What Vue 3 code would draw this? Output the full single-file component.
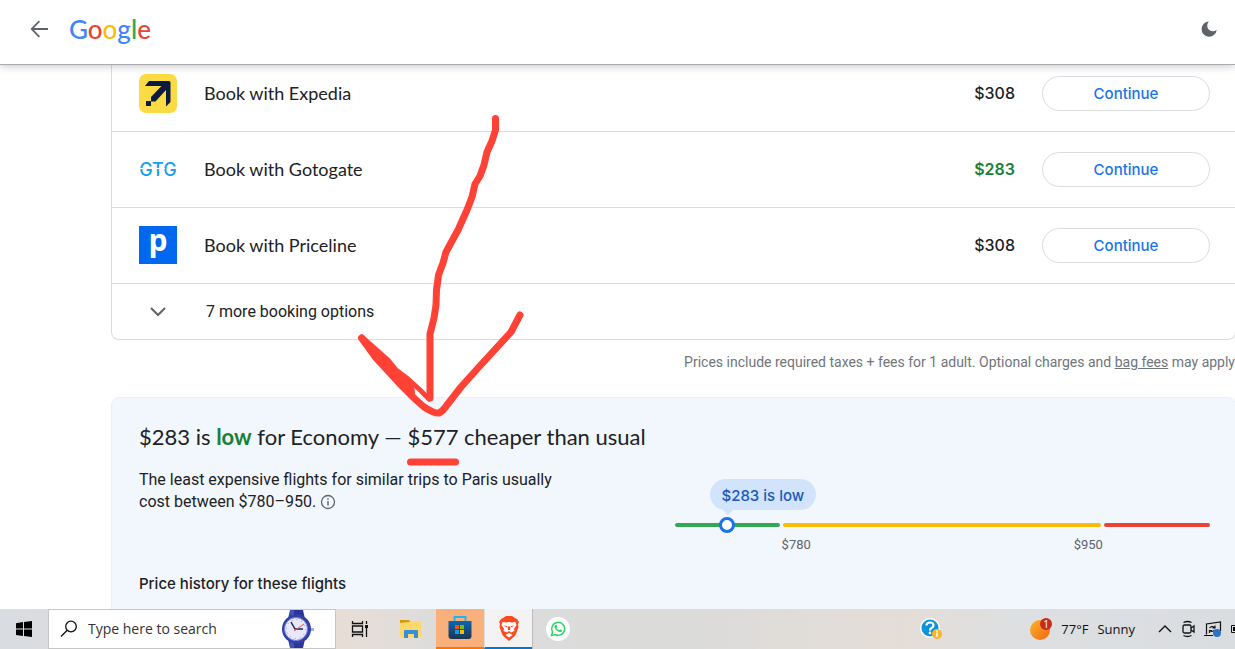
<script setup>
import { ref } from 'vue'

const logo = [
  { ch: 'G', tone: 'blue' },
  { ch: 'o', tone: 'red' },
  { ch: 'o', tone: 'yellow' },
  { ch: 'g', tone: 'blue' },
  { ch: 'l', tone: 'green' },
  { ch: 'e', tone: 'red' },
]
const offers = [
  { id: 'expedia', name: 'Expedia', price: '$308', low: false },
  { id: 'gotogate', name: 'Gotogate', price: '$283', low: true },
  { id: 'priceline', name: 'Priceline', price: '$308', low: false },
]
const query = ref('')
</script>

<template>
  <div class="screen">
    <header class="topbar">
      <button class="icon-btn" type="button" aria-label="Back">
        <svg width="24" height="24" viewBox="0 0 24 24"><path fill="#5f6368" d="M21 11H7l6-6.200L11.700 3.500 3.500 12l8.200 8.500 1.300-1.300L7 13h14z" /></svg>
      </button>
      <a class="logo" href="#" aria-label="Google"><span v-for="(l, i) in logo" :key="i" :class="l.tone">{{ l.ch }}</span></a>
      <button class="icon-btn theme" type="button" aria-label="Dark theme">
        <svg width="18" height="18" viewBox="0 0 18 18"><path fill="#5f6368" d="M9 1.500a7.600 7.600 0 1 0 7.700 8.300A5.200 5.200 0 0 1 9 1.500z" /></svg>
      </button>
    </header>

    <main class="page">
      <section class="options">
        <div v-for="o in offers" :key="o.id" class="offer">
          <svg v-if="o.id === 'expedia'" class="brand" viewBox="0 0 38 39">
            <rect width="38" height="39" rx="7" fill="#fbdb43" />
            <path fill="#0c1a3e" d="M10 7h20q1.500 0 1.500 1.500V28l-4.500 4.500V16L16.500 27.500H12V23L22.500 12H6zM7 27h5v5H7z" />
          </svg>
          <svg v-else-if="o.id === 'gotogate'" class="brand square" viewBox="0 0 38 38">
            <text class="gtg" x="19" y="26" text-anchor="middle">GTG</text>
            <path stroke="#fff" d="M0 18.500h7M13 18.500h13M31 18.500h7" />
          </svg>
          <svg v-else class="brand square" viewBox="0 0 38 38">
            <rect width="38" height="38" fill="#0068ef" />
            <text class="pl" x="19" y="25" text-anchor="middle">p</text>
          </svg>
          <span class="offer-name">Book with {{ o.name }}</span>
          <span class="price" :class="{ low: o.low }">{{ o.price }}</span>
          <button class="continue" type="button">Continue</button>
        </div>
        <button class="more" type="button">
          <svg class="brand" width="38" height="24" viewBox="0 0 38 24"><path fill="none" stroke="#5f6368" stroke-width="2" d="M12 9l7 7 7-7" /></svg>
          <span>7 more booking options</span>
        </button>
      </section>

      <p class="note">Prices include required taxes + fees for 1 adult. Optional charges and <a href="#">bag fees</a> may apply</p>

      <section class="insight">
        <h2>$283 is <b>low</b> for Economy — $577 cheaper than usual</h2>
        <div class="insight-body">
          <p class="desc">The least expensive flights for similar trips to Paris usually<br />cost between $780–950.
            <svg class="info" width="16" height="16" viewBox="0 0 16 16"><circle cx="8" cy="8" r="6.500" fill="none" stroke="#5f6368" stroke-width="1.300" /><path stroke="#5f6368" stroke-width="1.400" d="M8 7v4.500M8 4.300v1.500" /></svg>
          </p>
          <div class="scale">
            <div class="track">
              <div class="seg cheap"><span class="bubble">$283 is low</span><span class="thumb"></span></div>
              <div class="seg usual"></div>
              <div class="seg high"></div>
            </div>
            <div class="ticks"><span>$780</span><span>$950</span></div>
          </div>
        </div>
        <h3>Price history for these flights</h3>
      </section>
    </main>

    <svg class="sketch" width="170" height="360" viewBox="355 110 170 360" fill="none" stroke="#ff4136" stroke-linecap="round" stroke-linejoin="round">
      <path stroke-width="7" d="M495.500 118.500V130L492 141 487 152 484 165 480 176 475 184 472 197 467 210 458 230 446 252 443 263 438.500 275 436.500 290 436 305 434 318 430 334V398" />
      <path stroke-width="7" d="M361.500 338L376 358 400 384 415 399 424 407 Q435 414 439 413 Q443 411 447 405L461 387 478 368 511 332 520 315" />
      <path stroke-width="5" d="M362 337L388 360 396 370 408 379 419 389 429 399" />
      <path fill="#ff4136" stroke-width="4" d="M361 338L386 359 394 369 406 378 412 385 413 393 400 384 375 357z" />
      <path stroke-width="7" d="M410.500 462H455.500" />
    </svg>

    <footer class="taskbar">
      <button class="tb start" type="button" aria-label="Start">
        <svg width="16" height="16" viewBox="0 0 16 16"><path d="M0 2.200L7 1v6.500H0zM8 .9L16 0v7.500H8zM0 8.500h7V15l-7-1zM8 8.500h8V16l-8-1z" /></svg>
      </button>
      <label class="search">
        <svg width="18" height="18" viewBox="0 0 18 18" fill="none" stroke="#111" stroke-width="1.300"><circle cx="11" cy="6.500" r="5.300" /><path d="M7.200 10.300L1 16.500" /></svg>
        <input v-model="query" type="text" placeholder="Type here to search" />
        <svg class="watch" width="34" height="38" viewBox="0 0 34 38">
          <path fill="#2d3694" d="M9 0h13l2 9H7zM7 29h17l-2 9H9z" /><path fill="#4052bd" d="M9 0h4v38H9z" />
          <path fill="#9faee8" d="M28 18h5v3h-5z" />
          <circle cx="15.500" cy="19" r="14.500" fill="#343fa5" /><circle cx="15" cy="19" r="11.500" fill="#e9e8fa" stroke="#6b80e0" />
          <circle cx="15" cy="19" r="9.500" fill="none" stroke="#8d91bd" stroke-dasharray="1 4" />
          <path fill="none" stroke="#222456" stroke-width="1.500" d="M10 12l4 7h8" /><path stroke="#e4564d" d="M13 21l10-7" />
        </svg>
      </label>
      <button class="tb" type="button" aria-label="Task view">
        <svg width="18" height="18" viewBox="0 0 18 18" fill="none" stroke="#111" stroke-width="1.300"><path d="M1.500 1v2.500h10V1M1.500 17v-2.500h10V17M1.500 6h10v6h-10zM15.500 1v3M15.500 8v9" /><path fill="#111" stroke="none" d="M14 5h3v3h-3z" /></svg>
      </button>
      <button class="tb wide" type="button" aria-label="File Explorer">
        <svg width="22" height="20" viewBox="0 0 22 20"><path fill="#d9970b" d="M0 1h9l2 3H0z" /><path fill="#ffd86b" d="M0 4l10-1 2-1h9v16H0z" /><path fill="#3390d9" d="M4 12q0-1 1-1h12q1 0 1 1v7h-4v-4H8v4H4z" /></svg>
      </button>
      <button class="tb store" type="button" aria-label="Microsoft Store">
        <svg width="24" height="26" viewBox="0 0 24 26"><defs><linearGradient id="bag" x2="0" y2="1"><stop stop-color="#0868b0" /><stop offset="1" stop-color="#203454" /></linearGradient></defs><path fill="none" stroke="#22b5eb" stroke-width="2" d="M6.500 7V2h11v5" /><path fill="url(#bag)" d="M.500 6h23v15q0 3-3 3h-17q-3 0-3-3z" /><path fill="#f25022" d="M7 10h4v4H7z" /><path fill="#7fba00" d="M12 10h4v4h-4z" /><path fill="#00a4ef" d="M7 15h4v4H7z" /><path fill="#ffb900" d="M12 15h4v4h-4z" /></svg>
      </button>
      <button class="tb brave" type="button" aria-label="Brave">
        <svg width="22" height="25" viewBox="0 0 22 25"><path fill="#fb4b1f" d="M5 2l3-2h6l3 2 2 1 2 3-1 2 .500 3L18 18q-1 2-3 3.500L11 25l-4-3.500Q5 20 4 18L1.500 11 2 8 1 6l2-3z" /><path fill="#fff" d="M4.500 6l4 .500L11 6l2.500.500 4-.500 1 3-2.500 4 .500 2-3.500 1.500-2-1.500-2 1.500L5.500 15l.500-2-2.500-4zM7.500 19l3.500-2 3.500 2-3.500 2.500z" /><path fill="#fb4b1f" d="M5.500 9.500l3.500.500v1.500zM16.500 9.500l-3.500.500v1.500zM9.500 10.500h3L12 14h-2z" /></svg>
      </button>
      <span class="edge"></span>
      <button class="tb" type="button" aria-label="WhatsApp">
        <svg width="24" height="24" viewBox="0 0 24 24"><circle cx="12" cy="12" r="12" fill="#fff" /><path fill="none" stroke="#32d366" stroke-width="1.500" d="M5.500 18.500l1-3.500a6.500 6.500 0 1 1 2.500 2.500z" /><path fill="#32d366" d="M9 8l1.500-.3.800 2-.8 1q1 2 2.700 2.500l1-1 1.900 1-.3 1.400q-1.300 1-3.500 0-3-1.600-3.800-4.600Q8.300 8.800 9 8z" /></svg>
      </button>

      <button class="tb help" type="button" aria-label="Get help">
        <svg width="23" height="22" viewBox="0 0 23 22"><circle cx="10" cy="10" r="10" fill="#fff" /><circle cx="10" cy="10" r="8.500" fill="#0794d8" /><path fill="none" stroke="#fff" stroke-width="2.200" d="M6.500 7.500q0-3 3.500-3t3.500 3q0 1.500-2 2.500-1.500.8-1.500 2.500" /><circle cx="10" cy="15" r="1.400" fill="#fff" /><circle cx="17" cy="16" r="5" fill="#f8b62d" /><path stroke="#fff" stroke-width="1.500" d="M17 14.500V19M17 12.500V14" /></svg>
      </button>
      <button class="weather" type="button">
        <svg width="22" height="22" viewBox="0 0 22 22"><defs><linearGradient id="sun" x2="1" y2="1"><stop stop-color="#fbb52d" /><stop offset="1" stop-color="#f3650e" /></linearGradient></defs><circle cx="10" cy="12" r="10" fill="url(#sun)" /><circle cx="16" cy="6" r="6" fill="#c52b1e" /><text class="count" x="16" y="10" text-anchor="middle">1</text></svg>
        <span>77°F</span><span>Sunny</span>
      </button>
      <div class="tray">
        <svg width="14" height="14" viewBox="0 0 14 14" fill="none" stroke="#111" stroke-width="1.400"><path d="M1 10l6-6 6 6" /></svg>
        <svg width="14" height="18" viewBox="0 0 14 18" fill="none" stroke="#111" stroke-width="1.300"><rect x="2" y="5" width="8" height="8" rx="1.500" /><path d="M10 8l3-2v6l-3-2M2.500 2.500q4-2 8 0M2.500 15.500q4 2 8 0" /></svg>
        <svg width="18" height="18" viewBox="0 0 18 18" fill="none" stroke="#111" stroke-width="1.200"><path d="M2.500 14.500V4L16.500 2v9M0 15.500h9M5.500 8q2-2.500 5-.500M11 5.500v2.500H8.500M10.500 10q-2 2.500-4.500.500M5.500 13v-2.500H8" /><circle cx="13" cy="13" r="4" fill="#2f72c4" stroke="none" /></svg>
        <svg class="battery" width="18" height="12" viewBox="0 0 18 12"><path fill="none" stroke="#111" d="M.500 2.500h15v7H.500z" /><path d="M2 4h12v4H2z" /></svg>
      </div>
    </footer>
  </div>
</template>

<style>
body { margin: 0; }
</style>

<style scoped>
* { box-sizing: border-box; }
.screen { position: relative; height: 100vh; display: flex; flex-direction: column; overflow: hidden; background: #fff; color: #202124; font-family: Roboto, sans-serif; }
button { border: 0; padding: 0; background: none; font: inherit; color: inherit; cursor: pointer; }
h2, h3, p { margin: 0; }
svg { display: block; flex: none; }

.topbar { position: relative; z-index: 1; flex: none; height: 65px; padding: 0 17px 6px 27px; display: flex; align-items: center; background: #fff; border-bottom: 1px solid #a9abb0; box-shadow: 0 1px 8px rgba(60, 64, 67, .3); }
.icon-btn { display: flex; }
.logo { margin-left: 18px; font: 500 26px/32px Lato, sans-serif; text-decoration: none; }
.blue { color: #4285f4; }
.red { color: #ea4335; }
.yellow { color: #fbbc05; }
.green { color: #34a853; }
.theme { margin-left: auto; }

.page { flex: 1; min-height: 0; overflow: hidden; padding-left: 111px; }
.options { margin: -9px -1px 0 0; border: 1px solid #dadce0; border-top: 0; border-radius: 0 0 8px 8px; }
.offer { height: 76px; padding: 0 25px 0 27px; display: flex; align-items: center; border-bottom: 1px solid #dadce0; font-family: Lato, sans-serif; }
.brand { width: 38px; overflow: visible; }
.square { margin-bottom: 1px; }
.gtg { font: 500 18px Inter, sans-serif; fill: #139df4; }
.pl { font: 700 30px "Open Sans", sans-serif; fill: #fff; }
.offer-name { margin-left: 27px; padding-bottom: 2px; font-size: 18px; line-height: 24px; }
.price { margin-left: auto; padding-bottom: 1px; font-size: 16px; line-height: 24px; font-family: Inter, sans-serif; font-weight: 500; }
.price.low { color: #188038; font-weight: 600; }
.continue { width: 168px; height: 35px; margin-left: 27px; border: 1px solid #dadce0; border-radius: 18px; color: #1a73e8; font: 500 15px/20px Inter, sans-serif; }
.more { width: 100%; height: 55px; padding: 0 0 1px 27px; display: flex; align-items: center; gap: 29px; font-size: 16px; }

.note { margin-top: 12px; color: #70757a; font-size: 14px; line-height: 20px; text-align: right; white-space: nowrap; }
.note a { color: inherit; }

.insight { height: 400px; margin: 25px -1px 0 0; padding: 23px 25px 0 27px; background: #f2f7fe; border: 1px solid #e8f0fe; border-radius: 8px; }
h2 { font: 400 22px/32px Lato, sans-serif; }
h2 b { color: #188038; font-weight: 700; }
.insight-body { height: 103px; margin-top: 16px; display: flex; justify-content: space-between; }
.desc { font-size: 16px; line-height: 22px; white-space: nowrap; }
.info { display: inline-block; vertical-align: -3px; }
.scale { width: 50%; padding-top: 54px; }
.track { display: grid; grid-template-columns: 1fr 3fr 1fr; gap: 3px; }
.seg { position: relative; height: 4px; border-radius: 2px; }
.cheap { background: #34a853; }
.usual { background: #fbbc04; }
.high { background: #ea4335; }
.thumb { position: absolute; left: 50%; top: 50%; width: 16px; height: 16px; border: 3px solid #1a73e8; border-radius: 50%; background: #fff; transform: translate(-50%, -50%); }
.bubble { position: absolute; left: 35px; bottom: 17px; height: 31px; padding: 0 12px; border-radius: 16px; background: #d2e3fc; color: #185abc; font: 500 15px/33px Inter, sans-serif; white-space: nowrap; }
.bubble::after { content: ""; position: absolute; left: 12px; top: 30px; border: 6px solid transparent; border-top-color: #d2e3fc; border-bottom: 0; }
.ticks { width: 60%; margin: 8px auto 0; display: flex; justify-content: space-between; color: #5f6368; font-size: 13px; line-height: 20px; }
h3 { font: 500 15px/24px Inter, sans-serif; }

.sketch { position: absolute; left: 355px; top: 110px; z-index: 2; pointer-events: none; }

.taskbar { flex: none; height: 40px; display: flex; align-items: stretch; overflow: hidden; background: linear-gradient(90deg, #d9dce1 0, #e7ddd6 28%, #dcdcdc 36%, #dbdbda 55%, #e4ddd7 73%, #dddfe1 82%, #dadde0 100%); font-family: "Open Sans", sans-serif; color: #111; }
.tb { flex: none; width: 48px; display: flex; align-items: center; justify-content: center; }
.search { flex: none; width: 288px; padding: 0 20px 0 11px; display: flex; align-items: center; border: 1px solid #c6c6c6; background: #fff; }
.search input { flex: 1; min-width: 0; margin-left: 10px; padding: 0; border: 0; outline: 0; background: none; font: 14px/20px "Open Sans", sans-serif; }
.search input::placeholder { color: #333; opacity: 1; }
.wide { width: 52px; padding-left: 2px; }
.store { background: #fab07b; border-bottom: 2px solid #ff7300; }
.brave { background: #f3f3f3; border-bottom: 2px solid #0078d7; border-left: 1px solid #ddd; }
.edge { flex: none; width: 2px; border-left: 1px solid #bbb; }
.help { margin-left: auto; }
.weather { margin-left: 75px; display: flex; align-items: center; gap: 9px; font-size: 13px; white-space: nowrap; }
.count { font: 10px "Open Sans", sans-serif; fill: #fff; }
.tray { margin: 0 -14px 0 23px; display: flex; align-items: center; gap: 9px; }
</style>
